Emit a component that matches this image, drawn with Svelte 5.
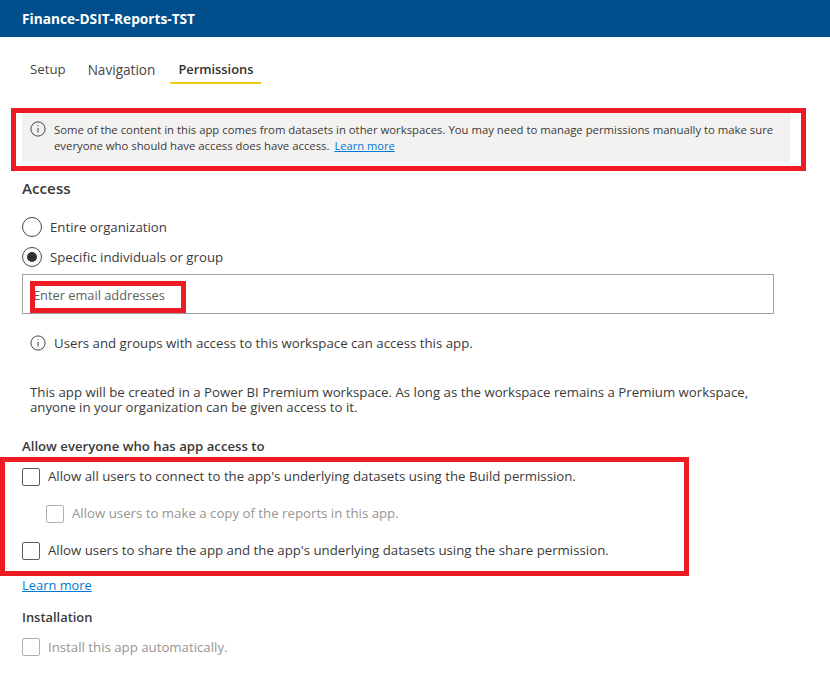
<script>
  const options = [
    { label: 'Entire organization', on: false },
    { label: 'Specific individuals or group', on: true }
  ];
</script>

<div class="page">
  <header class="top">Finance-DSIT-Reports-TST</header>

  <nav class="tabs">
    <span class="tab">Setup</span>
    <span class="tab">Navigation</span>
    <span class="tab active">Permissions</span>
  </nav>

  <section class="banner">
    <svg class="info" viewBox="0 0 16 16"><circle cx="8" cy="8" r="7.1" /><path d="M8 7v4.6M8 4.2v1.2" /></svg>
    <p>Some of the content in this app comes from datasets in other workspaces. You may need to manage permissions manually to make sure everyone who should have access does have access. <a href="#top">Learn more</a></p>
  </section>

  <h2 class="access">Access</h2>

  <div class="radios">
    {#each options as o}
      <div class="radio-row">
        <span class="radio" class:on={o.on}></span>
        <span>{o.label}</span>
      </div>
    {/each}
  </div>

  <div class="input">Enter email addresses</div>

  <div class="note">
    <svg class="info" viewBox="0 0 16 16"><circle cx="8" cy="8" r="7.1" /><path d="M8 7v4.6M8 4.2v1.2" /></svg>
    <span>Users and groups with access to this workspace can access this app.</span>
  </div>

  <p class="premium">This app will be created in a Power BI Premium workspace. As long as the workspace remains a Premium workspace, anyone in your organization can be given access to it.</p>

  <h3 class="allow">Allow everyone who has app access to</h3>

  <div class="checks">
    <div class="check-row"><span class="box"></span><span>Allow all users to connect to the app's underlying datasets using the Build permission.</span></div>
    <div class="check-row sub disabled"><span class="box"></span><span>Allow users to make a copy of the reports in this app.</span></div>
    <div class="check-row"><span class="box"></span><span>Allow users to share the app and the app's underlying datasets using the share permission.</span></div>
  </div>

  <a class="more" href="#top">Learn more</a>

  <h3 class="install">Installation</h3>
  <div class="check-row disabled last"><span class="box"></span><span>Install this app automatically.</span></div>

  <div class="mark m1"></div>
  <div class="mark m2"></div>
  <div class="mark m3"></div>
</div>

<style>
  :global(body) { margin: 0; background: #fff; }
  .page {
    position: relative;
    width: 830px;
    height: 699px;
    overflow: hidden;
    font-family: "Open Sans", "Noto Sans", sans-serif;
    font-size: 13.24px;
    color: #3b3a39;
    box-sizing: border-box;
    padding-left: 22px;
  }
  .top {
    margin-left: -22px;
    height: 37px;
    background: #004e8c;
    color: #fff;
    font-size: 13.7px;
    font-weight: 700;
    line-height: 37px;
    padding-left: 22px;
  }
  .tabs { display: flex; gap: 6px; margin-top: 23px; height: 24px; }
  .tab { padding: 0 8px; line-height: 19px; color: #484644; box-sizing: border-box; height: 24px; }
  .tab:nth-child(2) { font-size: 13.6px; }
  .tab.active { border-bottom: 2px solid #f2c811; font-weight: 600; font-size: 12.85px; color: #323130; margin-left: 1px; }
  .banner {
    display: flex;
    gap: 8px;
    width: 768px;
    height: 49px;
    margin-top: 29px;
    padding: 9px 8px 8px;
    box-sizing: border-box;
    background: #f3f2f1;
    font-size: 11.33px;
    line-height: 16px;
  }
  .banner p { margin: 0; width: 725px; }
  .banner .info { margin-top: -1px; }
  .banner a { color: #0078d4; text-decoration: underline; margin-left: 2px; font-size: 11.15px; }
  .more { color: #0078d4; text-decoration: underline; }
  .info { width: 16px; height: 16px; flex: none; fill: none; stroke: #484644; stroke-width: 1; }
  .access { margin: 16px 0 0; font-size: 15.2px; font-weight: 600; line-height: 20px; color: #3b3a39; }
  .radios { display: flex; flex-direction: column; gap: 10px; margin-top: 19px; }
  .radio-row { display: flex; align-items: center; gap: 8px; height: 20px; }
  .radio { width: 20px; height: 20px; border: 1px solid #484644; border-radius: 50%; box-sizing: border-box; position: relative; }
  .radio.on::after { content: ""; position: absolute; inset: 4px; border-radius: 50%; background: #323130; }
  .input {
    width: 752px;
    height: 40px;
    margin-top: 7px;
    border: 1px solid #a19f9d;
    box-sizing: border-box;
    line-height: 41px;
    padding-left: 10px;
    font-size: 12.8px;
    color: #605e5c;
  }
  .note { display: flex; align-items: center; gap: 8px; margin: 21px 0 0 8px; height: 16px; }
  .premium { margin: 34px 0 0 8px; width: 730px; line-height: 15px; }
  .allow { margin: 23px 0 0; font-size: 13.2px; font-weight: 600; line-height: 16px; color: #3b3a39; }
  .checks { display: flex; flex-direction: column; gap: 19px; margin-top: 14px; }
  .check-row { display: flex; align-items: center; gap: 8px; height: 18px; line-height: 16px; }
  .check-row span:last-child { margin-bottom: 3px; }
  .check-row.last span:last-child { margin-bottom: 1px; }
  .box { width: 18px; height: 18px; border: 1px solid #605e5c; border-radius: 2px; box-sizing: border-box; flex: none; }
  .sub { margin-left: 24px; }
  .disabled { color: #979593; }
  .disabled .box { border-color: #b3b0ad; }
  .more { display: block; margin-top: 17px; width: max-content; line-height: 16px; font-size: 12.9px; }
  .install { margin: 16px 0 0; font-size: 12.9px; font-weight: 600; line-height: 16px; color: #3b3a39; }
  .install + .check-row { margin-top: 13px; }
  .mark { position: absolute; border: 5px solid #ed1c24; box-sizing: border-box; }
  .m1 { left: 11px; top: 108px; width: 795px; height: 63px; }
  .m2 { left: 30px; top: 281px; width: 156px; height: 32px; }
  .m3 { left: 0; top: 457px; width: 689px; height: 119px; }
</style>
